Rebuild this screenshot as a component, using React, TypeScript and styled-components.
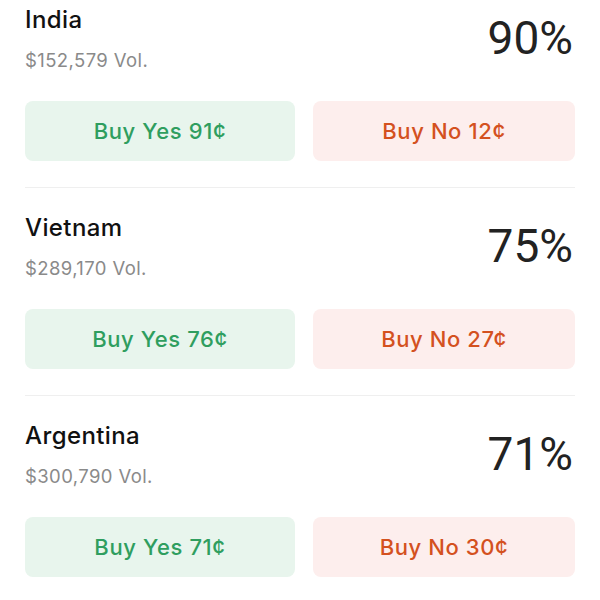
import React from 'react';
import styled, { createGlobalStyle } from 'styled-components';

const GlobalStyle = createGlobalStyle`
  body {
    margin: 0;
    background: #ffffff;
    font-family: Inter, "Noto Sans", sans-serif;
    -webkit-font-smoothing: antialiased;
  }
`;

interface Market {
  name: string;
  volume: string;
  chance: number;
  yes: number;
  no: number;
}

const markets: Market[] = [
  { name: 'India', volume: '$152,579', chance: 90, yes: 91, no: 12 },
  { name: 'Vietnam', volume: '$289,170', chance: 75, yes: 76, no: 27 },
  { name: 'Argentina', volume: '$300,790', chance: 71, yes: 71, no: 30 },
];

const List = styled.div`
  padding: 0 25px;
`;

const Row = styled.div`
  padding: 26px 0;
  border-bottom: 1px solid #efefef;

  &:first-child {
    padding-top: 6px;
  }
`;

const Header = styled.div`
  display: flex;
  align-items: center;
  justify-content: space-between;
`;

const Info = styled.div`
  display: flex;
  flex-direction: column;
  gap: 16px;
`;

const Name = styled.div`
  font-size: 24px;
  line-height: 28px;
  font-weight: 500;
  color: #111111;
  letter-spacing: 0.4px;
`;

const Volume = styled.div`
  font-size: 18.5px;
  line-height: 20px;
  color: #8a8a8a;
  letter-spacing: 0.4px;
`;

const Chance = styled.div`
  font-family: Roboto, "Liberation Sans", sans-serif;
  font-size: 46px;
  line-height: 46px;
  font-weight: 400;
  color: #222222;
  margin-right: 2px;
`;

const Actions = styled.div`
  display: grid;
  grid-template-columns: 271fr 263fr;
  gap: 18px;
  margin-top: 31px;
`;

const TradeButton = styled.button<{ $side: 'yes' | 'no' }>`
  height: 60px;
  border: none;
  border-radius: 8px;
  font-family: inherit;
  font-size: 22px;
  font-weight: 500;
  letter-spacing: 0.6px;
  cursor: pointer;
  background: ${(p) => (p.$side === 'yes' ? '#e8f5ed' : '#fdeeed')};
  color: ${(p) => (p.$side === 'yes' ? '#2f9e5f' : '#d4511f')};
`;

export default function App() {
  return (
    <>
      <GlobalStyle />
      <List>
        {markets.map((m) => (
          <Row key={m.name}>
            <Header>
              <Info>
                <Name>{m.name}</Name>
                <Volume>{m.volume} Vol.</Volume>
              </Info>
              <Chance>{m.chance}%</Chance>
            </Header>
            <Actions>
              <TradeButton $side="yes">Buy Yes {m.yes}¢</TradeButton>
              <TradeButton $side="no">Buy No {m.no}¢</TradeButton>
            </Actions>
          </Row>
        ))}
      </List>
    </>
  );
}
